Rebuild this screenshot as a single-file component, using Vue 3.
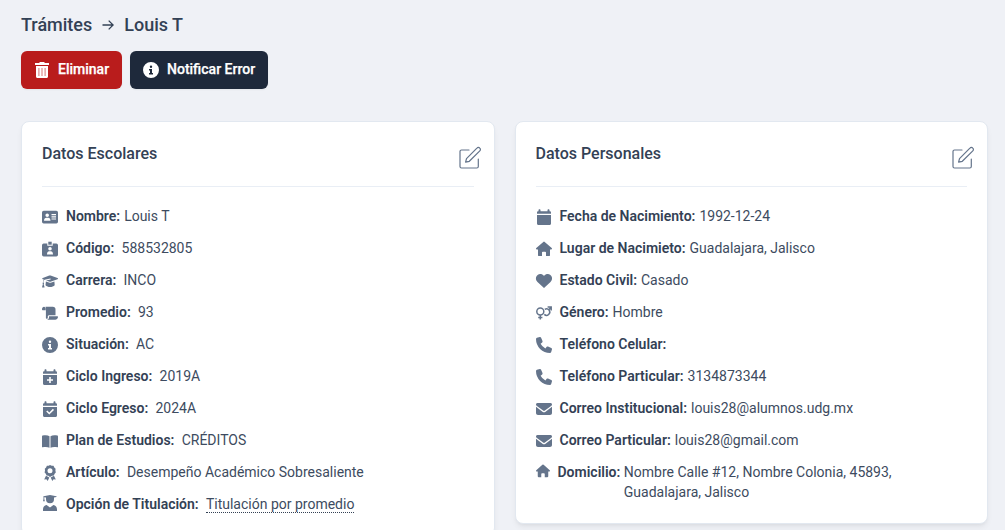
<script setup>
const icons = {
  idCard: '<path fill-rule="evenodd" d="M1.7 1.800h12.600A1.700 1.700 0 0 1 16 3.500v9.200a1.700 1.700 0 0 1-1.700 1.700H1.700A1.700 1.700 0 0 1 0 12.700V3.500a1.700 1.700 0 0 1 1.700-1.700ZM5.200 4.500a1.800 1.800 0 1 0 0 3.600 1.800 1.800 0 0 0 0-3.600ZM2 11.700h6.500c0-1.900-1-2.900-2.300-2.900H4.300C3 8.800 2 9.800 2 11.700ZM9.500 5v1.200H14V5Zm0 2.200v1.200H14V7.200Zm0 2.200v1.200H14V9.400Z"/>',
  badge: '<path fill-rule="evenodd" d="M1.700 2.500h3.600v2.200h5.400V2.500h3.600A1.700 1.700 0 0 1 16 4.200v9.600a1.700 1.700 0 0 1-1.700 1.700H1.700A1.700 1.700 0 0 1 0 13.800V4.200a1.700 1.700 0 0 1 1.700-1.700ZM8 6a1.800 1.800 0 1 0 0 3.600A1.800 1.800 0 0 0 8 6Zm-3 7.500h6c0-2-1-3.200-2.100-3.200H7.100C6 10.300 5 11.500 5 13.500Z"/><path d="M6.300.7h3.400v3H6.300z"/>',
  cap: '<path d="M8.600 2.500 15.500 5c.7.300.7.900 0 1.200L9.200 8.500a3 3 0 0 1-2.100 0L4 7.400l4.700-.9-.2-1-6 1.200c-.8.800-1.100 1.700-1.100 2.900.9.500.8 1.200.3 1.600l.8 2.700c.1.400-.1.600-.5.600H.6c-.4 0-.6-.2-.5-.6L.9 11c-.5-.5-.5-1.200.1-1.500 0-1.100.2-2.100.8-3L.8 6.200c-.8-.300-.8-.900 0-1.200l6.500-2.500a2 2 0 0 1 1.300 0Z"/><path d="m3.900 8.500 3 1.100c.8.300 1.700.300 2.500 0l3-1.100.3 3.700c-2 2.400-7.100 2.400-9.200 0Z"/>',
  scroll: '<path d="M3.500 1.800h7.300A2.700 2.700 0 0 1 13.500 4.500v5.700H7.200c-.8 0-1.400.6-1.400 1.400v1.200c0 1.400-1.900 1.400-1.900 0V4.100C3.900 2.900 3.500 1.800 3.500 1.800Z"/><path d="M2 1.800c1 0 1.700 1 1.700 2v1.500H1C.3 5.300 0 4.900 0 4.200 0 2.700.9 1.800 2 1.800ZM7 11.200h8.400c.4 0 .6.200.6.600 0 1.700-1.200 2.900-2.900 2.900H4.700C6.100 14.600 7 13.600 7 12.200Z"/>',
  info: '<path fill-rule="evenodd" d="M8 0a8 8 0 1 0 0 16A8 8 0 0 0 8 0Zm0 3.600a1.200 1.200 0 1 1 0 2.400 1.200 1.200 0 0 1 0-2.400ZM6 7h3v4h1v1.500H6V11h1V8.500H6Z"/>',
  calendar: '<path d="M3.500.3c.6 0 1 .4 1 1v1h7v-1c0-1.300 2-1.300 2 0v1h.2c.8 0 1.300.5 1.300 1.300v1.200H1V3.600c0-.8.500-1.300 1.300-1.300h.2v-1c0-.6.400-1 1-1ZM1 5.900h14v8.600c0 .9-.6 1.500-1.500 1.500h-11c-.9 0-1.500-.6-1.500-1.500Z"/>',
  calendarPlus: '<path fill-rule="evenodd" d="M3.500.3c.6 0 1 .4 1 1v1h7v-1c0-1.300 2-1.300 2 0v1h.2c.8 0 1.300.5 1.300 1.300v1.200H1V3.600c0-.8.500-1.300 1.300-1.300h.2v-1c0-.6.400-1 1-1ZM1 5.900h14v8.600c0 .9-.6 1.500-1.500 1.500h-11c-.9 0-1.500-.6-1.500-1.500Zm6.200 2v2.300H5v1.500h2.200V14h1.600v-2.300H11v-1.500H8.800V7.900Z"/>',
  calendarCheck: '<path fill-rule="evenodd" d="M3.500.3c.6 0 1 .4 1 1v1h7v-1c0-1.300 2-1.300 2 0v1h.2c.8 0 1.300.5 1.300 1.300v1.200H1V3.600c0-.8.500-1.300 1.300-1.300h.2v-1c0-.6.400-1 1-1ZM1 5.900h14v8.600c0 .9-.6 1.500-1.500 1.500h-11c-.9 0-1.500-.6-1.500-1.500Zm9.900 1.900-3.600 3.600-2-1.900-1.100 1.100 3.100 3 4.700-4.700Z"/>',
  book: '<path d="M7.500 3.200v11.600C5.900 13.900 3.500 13.700.6 14.300c-.400.100-.6-.1-.6-.5V3.400c0-.4.200-.7.600-.8 2.700-.6 5.300-.4 6.900.6ZM8.500 3.200v11.600c1.600-.9 4-1.100 6.900-.5.400.1.600-.1.600-.5V3.400c0-.4-.2-.7-.6-.8-2.700-.6-5.300-.4-6.900.6Z"/>',
  award: '<path fill-rule="evenodd" d="m8 0 1.700.7 1.800.1.800 1.700 1.300 1.300-.2 1.800.4 1.800-1.200 1.400-.7 1.600-1.800.4L8 12l-1.600-1.200-1.800-.4-.8-1.600-1.200-1.400.4-1.800-.2-1.800 1.300-1.300.8-1.700 1.800-.1ZM8 3.300a2.500 2.500 0 1 0 0 5 2.500 2.500 0 0 0 0-5Z"/><path d="m4 10.800 3.300 1.600L5.700 16l-1.300-1.700-2.200.200ZM12 10.800l-3.300 1.600 1.600 3.600 1.300-1.700 2.200.200Z"/>',
  graduate: '<path d="m8 .1 6.300 1.100c.5.100.5.700 0 .8l-2.300.6v1.700a4 4 0 0 1-8 0V2.600L2.300 2.200v1.700l.6 2.300H1l.5-2.300V2c-.4-.2-.3-.7.200-.8ZM1 16v-1.500c0-2.300 1.300-4.200 3.600-4.500L8 12.400l3.400-2.400c2.300.3 3.600 2.200 3.600 4.500V16Z"/>',
  house: '<path d="M7.300.9a1 1 0 0 1 1.400 0l7 6.200c.6.600.2 1.500-.6 1.500H14v5.300c0 .8-.4 1.200-1.200 1.200H10v-3.500c0-.6-.3-.9-.9-.9H6.900c-.6 0-.9.3-.9.900v3.500H3.200c-.8 0-1.200-.4-1.200-1.200V8.600H.9C.1 8.600-.3 7.700.3 7.100Z"/>',
  heart: '<path d="m8 14.900-6.500-6C-.7 6.800-.5 3.600 1.600 2 3.500.5 6.300.9 8 3c1.700-2.100 4.500-2.500 6.400-1 2.100 1.600 2.300 4.800.1 6.900Z"/>',
  gender: '<g fill="none" stroke="currentColor" stroke-width="1.500"><path d="M4.300 3a3.500 3.500 0 1 1 0 7 3.500 3.500 0 0 1 0-7ZM4.300 10v4.600M2.200 12.500h4.200M8.300 9.400A3.200 3.200 0 1 0 8.800 4.400M12.400 5.200l2.700-2.900M11.600 1.900h3.600v3.600"/></g>',
  phone: '<path d="m5.100.8 1.400 3.300c.2.500.1 1-.3 1.300L4.600 6.700a11 11 0 0 0 4.800 4.700l1.300-1.600c.3-.4.800-.5 1.300-.3l3.300 1.400c.5.200.8.700.7 1.300l-.8 2.900c-.1.500-.6.900-1.200.9A14 14 0 0 1 0 2C0 1.400.4.900.9.800L3.800 0c.6-.1 1.100.2 1.300.8Z"/>',
  envelope: '<path d="M1.500 2h13A1.500 1.500 0 0 1 15.400 4.700L8.900 9.600c-.5.400-1.300.4-1.800 0L.6 4.700A1.500 1.500 0 0 1 1.500 2ZM0 5.800l6.500 4.900c.9.700 2.100.7 3 0L16 5.800V12c0 1.100-.9 2-2 2H2c-1.100 0-2-.9-2-2Z"/>',
}

const school = [
  { icon: 'idCard', label: 'Nombre:', value: 'Louis T', tight: true },
  { icon: 'badge', label: 'Código:', value: '588532805' },
  { icon: 'cap', label: 'Carrera:', value: 'INCO' },
  { icon: 'scroll', label: 'Promedio:', value: '93' },
  { icon: 'info', label: 'Situación:', value: 'AC' },
  { icon: 'calendarPlus', label: 'Ciclo Ingreso:', value: '2019A' },
  { icon: 'calendarCheck', label: 'Ciclo Egreso:', value: '2024A' },
  { icon: 'book', label: 'Plan de Estudios:', value: 'CRÉDITOS' },
  { icon: 'award', label: 'Artículo:', value: 'Desempeño Académico Sobresaliente' },
  { icon: 'graduate', label: 'Opción de Titulación:', value: 'Titulación por promedio', dotted: true },
]
const personal = [
  { icon: 'calendar', label: 'Fecha de Nacimiento:', value: '1992-12-24' },
  { icon: 'house', label: 'Lugar de Nacimieto:', value: 'Guadalajara, Jalisco' },
  { icon: 'heart', label: 'Estado Civil:', value: 'Casado' },
  { icon: 'gender', label: 'Género:', value: 'Hombre' },
  { icon: 'phone', label: 'Teléfono Celular:', value: '' },
  { icon: 'phone', label: 'Teléfono Particular:', value: '3134873344' },
  { icon: 'envelope', label: 'Correo Institucional:', value: 'louis28@alumnos.udg.mx' },
  { icon: 'envelope', label: 'Correo Particular:', value: 'louis28@gmail.com' },
].map((row) => ({ ...row, tight: true }))
const cards = [
  { title: 'Datos Escolares', rows: school },
  { title: 'Datos Personales', rows: personal, address: true },
]
</script>

<template>
  <main class="page">
    <h1 class="crumbs">
      <span>Trámites</span>
      <svg class="arrow" viewBox="0 0 12 12"><path d="M.5 6h10.500M6.700 1.600 11.100 6l-4.400 4.400" /></svg>
      <span>Louis T</span>
    </h1>
    <div class="actions">
      <button class="btn danger">
        <svg class="btn-icon" viewBox="0 0 16 16"><path d="M5.500 0h5v1H15v2H1V1h4.500Z" /><path fill-opacity=".5" d="M4 6h8v8H4z" /><path fill-rule="evenodd" d="M2 4h12v10.500c0 .9-.6 1.500-1.500 1.500h-9c-.9 0-1.500-.6-1.500-1.500Zm2.300 2v8h1.200V6Zm3.100 0v8h1.200V6Zm3.100 0v8h1.200V6Z" /></svg>
        <span>Eliminar</span>
      </button>
      <button class="btn dark">
        <svg class="btn-icon" viewBox="0 0 16 16" v-html="icons.info"></svg>
        <span>Notificar Error</span>
      </button>
    </div>
    <div class="cards">
      <section v-for="card in cards" :key="card.title" class="card">
        <header class="card-head">
          <h2>{{ card.title }}</h2>
          <svg class="edit" viewBox="0 0 24 24"><path d="M11 4H3.500A1.500 1.500 0 0 0 2 5.500v15A1.500 1.500 0 0 0 3.500 22h15.300a1.500 1.500 0 0 0 1.500-1.500V13M8.500 12.600 18.900 2.100a1.900 1.900 0 0 1 2.900 0 1.900 1.900 0 0 1 0 2.800L11.300 15.300l-3.700.9Z" /></svg>
        </header>
        <ul class="rows">
          <li v-for="row in card.rows" :key="row.label" class="row">
            <svg class="icon" :class="{ raised: row.dotted }" viewBox="0 0 16 16" v-html="icons[row.icon]"></svg>
            <span class="label">{{ row.label }}</span>
            <span class="value" :class="{ tight: row.tight, dotted: row.dotted }">{{ row.value }}</span>
          </li>
          <li v-if="card.address" class="row address">
            <svg class="icon small" viewBox="0 0 16 16" v-html="icons.house"></svg>
            <span class="label">Domicilio:</span>
            <span class="value">Nombre Calle #12, Nombre Colonia, 45893, Guadalajara, Jalisco</span>
          </li>
        </ul>
      </section>
    </div>
  </main>
</template>

<style>
html, body { overflow: hidden; background: #eff1f6; }
</style>

<style scoped>
* { box-sizing: border-box; }
.page { height: 530px; overflow: hidden; padding: 11px 17px 0 21px; background: #eff1f6; color: #334155; font: 400 14px/20px Roboto, sans-serif; }
h1, h2 { margin: 0; font-weight: 500; }
.crumbs { display: flex; align-items: center; height: 28px; font-size: 18px; font-weight: 500; line-height: 28px; }
.arrow { width: 12px; height: 12px; margin: 0 10px; fill: none; stroke: currentColor; stroke-width: 1.300; }
.actions { display: flex; gap: 8px; margin-top: 12px; }
.btn { display: flex; align-items: center; gap: 8px; height: 38px; padding: 0 12px 2px 13px; border: 0; border-radius: 6px; color: #fff; font: 500 14px/20px Roboto, sans-serif; box-shadow: 0 1px 2px #0000000d; }
.danger { width: 101px; background: #b91c1c; }
.dark { width: 138px; background: #1e293b; }
.btn span { -webkit-text-stroke: .25px currentColor; }
.btn-icon { width: 16px; height: 16px; flex: none; fill: currentColor; transform: translateY(1px); }
.cards { display: grid; grid-template-columns: 1fr 1fr; gap: 20px; align-items: start; margin-top: 32px; }
.card { padding: 20px 20px 21px; border: 1px solid #e2e8f0; border-radius: 8px; background: #fff; box-shadow: 0 4px 6px -1px #0000000f, 0 2px 4px -2px #0000000f; }
.card-head { display: flex; justify-content: space-between; height: 45px; border-bottom: 1px solid #e9eef5; }
.card-head h2 { font-size: 16px; line-height: 24px; }
.edit { width: 24px; height: 24px; margin: 4px -8px 0 0; fill: none; stroke: #64748b; stroke-width: 1.200; stroke-linejoin: round; stroke-linecap: round; }
.rows { list-style: none; margin: 19px 0 0; padding: 0; display: grid; gap: 12px; }
.row { display: flex; align-items: flex-start; min-height: 20px; }
.icon { width: 16px; height: 16px; flex: none; margin: 3px 8px 0 0; fill: currentColor; color: #64748b; overflow: visible; }
.raised { margin-top: 1px; }
.label { font-weight: 600; white-space: nowrap; }
.value { margin-left: 7.250px; color: #3d4b60; }
.value.tight { margin-left: 4px; }
.dotted { border-bottom: 1px dotted #334155; line-height: 16px; margin-top: 2px; height: 17px; }
.address .value { width: 280px; margin-left: 3.500px; }
.icon.small { width: 14px; height: 14px; margin-top: 2px; }
</style>
